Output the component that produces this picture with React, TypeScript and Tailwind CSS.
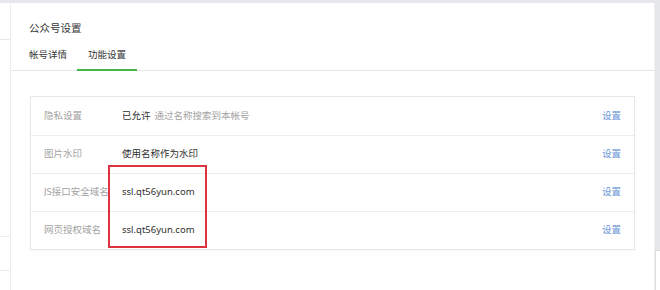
import React from "react";

const rows = [
  { label: "隐私设置", value: "已允许", desc: "通过名称搜索到本帐号" },
  { label: "图片水印", value: "使用名称作为水印" },
  { label: "JS接口安全域名", value: "ssl.qt56yun.com" },
  { label: "网页授权域名", value: "ssl.qt56yun.com" },
];

export default function App() {
  return (
    <div
      className="relative w-[660px] h-[290px] bg-white overflow-hidden flex flex-col"
      style={{ fontFamily: '"Noto Sans", "Noto Sans CJK SC", sans-serif' }}
    >
      {/* top strip */}
      <div className="h-[3px] bg-[#e6e7eb] shrink-0" />

      <div className="flex flex-1">
        {/* sidebar edge */}
        <div className="w-[11px] border-r border-[#ececec] flex flex-col">
          <div className="h-[37px] border-b border-[#e8e8e8]" />
          <div className="h-[197px] border-b border-[#ececec]" />
          <div className="h-[34px] border-b border-[#ececec]" />
        </div>

        {/* main */}
        <div className="flex-1 flex flex-col border-r border-[#f0f0f0]">
          <div className="pl-[18px] pt-[18px] text-[10.5px] leading-[14px] text-[#353535]">
            公众号设置
          </div>

          {/* tabs */}
          <div className="mt-[6px] flex pl-[18px] border-b border-[#e7e7eb] h-[30px] items-stretch text-[9.5px] text-[#353535]">
            <div className="w-[48px] flex items-center">帐号详情</div>
            <div className="w-[60px] flex items-center justify-center border-b-2 border-[#44b549] -mb-px">
              功能设置
            </div>
          </div>

          {/* settings table */}
          <div className="ml-[19px] mt-[25px] w-[605px] border border-[#e7e7eb] shadow-[0_1px_2px_rgba(0,0,0,0.04)]">
            {rows.map((r, i) => (
              <div
                key={r.label}
                className={`flex items-center h-[38px] px-[13px] ${i > 0 ? "border-t border-[#ededed]" : ""}`}
              >
                <div className="w-[78px] text-[9.5px] text-[#a3a3a3] whitespace-nowrap overflow-hidden">{r.label}</div>
                <div className="flex-1 text-[9.5px] text-[#2f2f2f] whitespace-nowrap">
                  {r.value}
                  {r.desc && <span className="ml-[4px] text-[#a3a3a3]">{r.desc}</span>}
                </div>
                <div className="text-[9.5px] text-[#6b97d8]">设置</div>
              </div>
            ))}
          </div>
        </div>

        {/* right scroll strip */}
        <div className="w-[5px] flex flex-col">
          <div className="h-[247px] bg-[#e6e7eb]" />
          <div className="flex-1 border-l border-t border-[#dcdcdc] bg-white" />
        </div>
      </div>

      {/* red annotation box */}
      <div className="absolute left-[108px] top-[165px] w-[99px] h-[83px] border-2 border-[#dd3340]" />
    </div>
  );
}
